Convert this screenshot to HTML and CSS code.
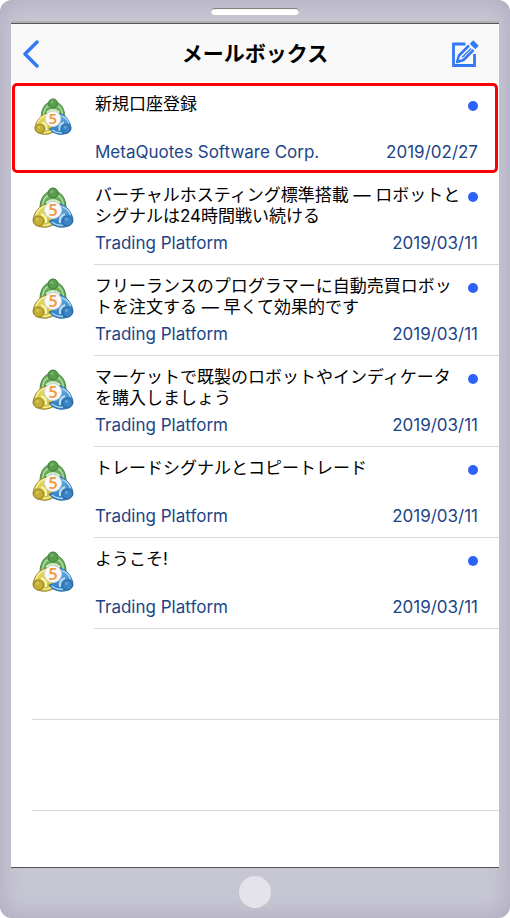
FILE: index.html
```html
<!DOCTYPE html>
<html lang="ja">
<head>
<meta charset="utf-8">
<meta name="viewport" content="width=device-width, initial-scale=1">
<title>メールボックス</title>
<link rel="stylesheet" href="styles.css">
</head>
<body>
<svg class="defs" aria-hidden="true">
  <defs>
    <linearGradient id="green" x1="0" y1="0" x2="0" y2="1"><stop offset="0" stop-color="#79b86b"/><stop offset="1" stop-color="#4a9640"/></linearGradient>
    <linearGradient id="yellow" x1="0" y1="0" x2="0" y2="1"><stop offset="0" stop-color="#e9df62"/><stop offset="1" stop-color="#c9b83a"/></linearGradient>
    <linearGradient id="blue" x1="0" y1="0" x2="0" y2="1"><stop offset="0" stop-color="#66aee2"/><stop offset="1" stop-color="#2d78bd"/></linearGradient>
    <symbol id="logo" viewBox="0 0 42 42">
      <path d="M8 21C8 11 13 4 21 4S34 11 34 21C30 24 25 25 21 25S12 24 8 21Z" fill="url(#green)" stroke="#4b8a42"/>
      <path d="M10.500 19C11 13 13 10 16 9M31.500 19C31 13 29 10 26 9" fill="none" stroke="#b4dca8" stroke-width="1.500"/>
      <path d="M14 16Q21 10 28 16" fill="none" stroke="#d0ebc5" stroke-width="2"/>
      <path d="M15 17C8 18 2 25 1 33C1 38 8 41 15 40C20 39 23 37 25 34C20 31 17 24 15 17Z" fill="url(#yellow)" stroke="#97852c"/>
      <path d="M4 28C6 23 9 20 13 19M11 38.500C15 38.500 19 37 22 34.500" fill="none" stroke="#f7f0a0" stroke-width="1.500"/>
      <path d="M9 27Q15 29 14 36" fill="none" stroke="#faf5b8" stroke-width="2"/>
      <path d="M28 17C34 18 40 25 41 33C41 38 34 41 27 40C22 39 19 37 17 34C22 33 27 27 28 17Z" fill="url(#blue)" stroke="#2d6fa7"/>
      <path d="M30.500 20C34 21 37 24 38.500 28M20 35C23 37.500 27 38.500 31 38.500" fill="none" stroke="#a8d8f5" stroke-width="1.500"/>
      <path d="M33 27Q27 29 28 36" fill="none" stroke="#b9e0f7" stroke-width="2"/>
      <circle cx="21" cy="6" r="5" fill="#5a9d4e" stroke="#3d7e36"/>
      <circle cx="6.500" cy="34" r="5" fill="#c4ae35" stroke="#93802a"/>
      <circle cx="35.500" cy="34" r="5" fill="#3c84c2" stroke="#25649f"/>
      <circle cx="20" cy="4.500" r="1.500" fill="#80b673"/>
      <circle cx="5.500" cy="32.500" r="1.500" fill="#d7c65a"/>
      <circle cx="34.500" cy="32.500" r="1.500" fill="#66a5d7"/>
      <circle cx="21" cy="23" r="8.500" fill="#fafafa" stroke="#d7d8dc"/>
      <text x="21" y="29" text-anchor="middle" class="logo-digit">5</text>
    </symbol>
  </defs>
</svg>
<div class="phone">
  <div class="bezel bezel-top"><span class="speaker"></span></div>
  <main class="screen">
    <header class="bar">
      <button class="icon-button" type="button" aria-label="戻る">
        <svg width="18" height="28" viewBox="0 0 18 28"><path d="M15 2 3 14 15 26" fill="none" stroke="#3478f6" stroke-width="3.500" stroke-linecap="round" stroke-linejoin="round"/></svg>
      </button>
      <h1 class="title">メールボックス</h1>
      <button class="icon-button compose" type="button" aria-label="新規メール">
        <svg width="28" height="28" viewBox="0 0 28 28" fill="none" stroke="#3478f6">
          <path d="M14.500 4H2.500V25.500H23.500V14" stroke-width="2.800"/>
          <path d="M18 5.500 8 15.500 6 22 12.500 20 22.500 10" stroke-width="2.500" stroke-linejoin="round"/>
          <path d="M11 17.500 20 8.500" stroke-width="1.500"/>
          <path d="M20.500 2 26 7.500" stroke-width="5"/>
        </svg>
      </button>
    </header>
    <ul class="list">
      <li class="mail selected">
        <svg class="logo" aria-hidden="true"><use href="#logo"/></svg>
        <div class="body"><h2 class="subject">新規口座登録</h2><span class="dot"></span>
          <p class="meta"><span>MetaQuotes Software Corp.</span><time>2019/02/27</time></p></div>
      </li>
      <li class="mail">
        <svg class="logo" aria-hidden="true"><use href="#logo"/></svg>
        <div class="body"><h2 class="subject">バーチャルホスティング標準搭載 — ロボットとシグナルは24時間戦い続ける</h2><span class="dot"></span>
          <p class="meta"><span>Trading Platform</span><time>2019/03/11</time></p></div>
      </li>
      <li class="mail">
        <svg class="logo" aria-hidden="true"><use href="#logo"/></svg>
        <div class="body"><h2 class="subject">フリーランスのプログラマーに自動売買ロボットを注文する — 早くて効果的です</h2><span class="dot"></span>
          <p class="meta"><span>Trading Platform</span><time>2019/03/11</time></p></div>
      </li>
      <li class="mail">
        <svg class="logo" aria-hidden="true"><use href="#logo"/></svg>
        <div class="body"><h2 class="subject">マーケットで既製のロボットやインディケータを購入しましょう</h2><span class="dot"></span>
          <p class="meta"><span>Trading Platform</span><time>2019/03/11</time></p></div>
      </li>
      <li class="mail">
        <svg class="logo" aria-hidden="true"><use href="#logo"/></svg>
        <div class="body"><h2 class="subject">トレードシグナルとコピートレード</h2><span class="dot"></span>
          <p class="meta"><span>Trading Platform</span><time>2019/03/11</time></p></div>
      </li>
      <li class="mail">
        <svg class="logo" aria-hidden="true"><use href="#logo"/></svg>
        <div class="body"><h2 class="subject">ようこそ!</h2><span class="dot"></span>
          <p class="meta"><span>Trading Platform</span><time>2019/03/11</time></p></div>
      </li>
      <li class="empty"></li>
      <li class="empty"></li>
    </ul>
  </main>
  <div class="bezel bezel-bottom"><span class="home"></span></div>
</div>
</body>
</html>
```
FILE: styles.css
```css
* { box-sizing: border-box; }
body {
  margin: 0;
  background: #fff;
  color: #000;
  font-family: Inter, "Noto Sans CJK JP", sans-serif;
  font-size: 17px;
  line-height: 21px;
}
h1, h2, p, ul { margin: 0; padding: 0; font: inherit; }
ul { list-style: none; }
.defs { position: absolute; width: 0; height: 0; }
.logo-digit { font: 600 16px "Noto Sans", sans-serif; fill: #f09a45; }

.phone {
  display: flex;
  flex-direction: column;
  min-height: 100vh;
  padding: 0 11px;
  border-radius: 12px;
  background: #c7c6d3;
  box-shadow: inset 0 0 24px #aaa8bc;
}
.bezel { display: flex; justify-content: center; }
.bezel-top { height: 24px; padding-top: 8px; border-bottom: 1px solid #555; box-shadow: inset 0 -2px #b1b1b3; }
.bezel-bottom { height: 51px; padding-top: 8px; border-top: 1px solid #555; }
.speaker {
  width: 88px;
  height: 7px;
  border-radius: 4px;
  background: #fff;
  box-shadow: inset 0 1px 1px #777;
}
.home { width: 32px; height: 32px; border-radius: 50%; background: #e3e3e9; }

.screen { flex: 1; background: #fff; }
.bar {
  display: grid;
  grid-template-columns: 1fr auto 1fr;
  align-items: center;
  height: 59px;
  padding: 2px 11px 0;
  background: #f9f9f9;
  border-bottom: 2px solid #fff;
}
.icon-button {
  display: flex;
  width: 28px;
  padding: 0;
  border: 0;
  background: none;
}
.compose { justify-self: end; margin-right: 9px; }
.title { font-size: 21px; font-weight: 700; line-height: 28px; }

.mail { position: relative; display: flex; gap: 20px; padding-left: 21px; }
.logo { flex: none; width: 42px; height: 42px; margin-top: 13px; }
.selected .logo { padding: 2px; }
.body {
  flex: 1;
  display: grid;
  grid-template-columns: 1fr 10px;
  grid-template-rows: 42px 21px;
  gap: 6px 4px;
  padding: 11px 21px 10px 1px;
  border-bottom: 1px solid #d8d8da;
}
.dot { width: 10px; height: 10px; margin-top: 7px; border-radius: 50%; background: #2c62f6; }
.meta {
  grid-column: 1 / -1;
  display: flex;
  justify-content: space-between;
  color: #1c4587;
}
.selected::after {
  content: "";
  position: absolute;
  inset: 0 1px 1px;
  border: 3px solid #f00;
  border-radius: 5px;
}
.selected .body { border-color: transparent; }
.empty { height: 91px; margin-left: 21px; border-bottom: 1px solid #d8d8da; }
```
